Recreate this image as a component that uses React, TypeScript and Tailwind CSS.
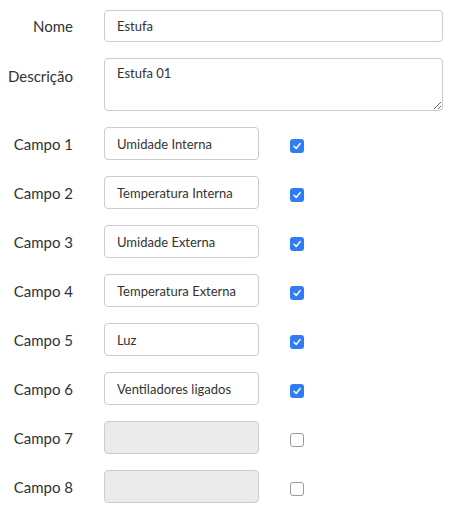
const campos = [
    { label: 'Campo 1', value: 'Umidade Interna', checked: true },
    { label: 'Campo 2', value: 'Temperatura Interna', checked: true },
    { label: 'Campo 3', value: 'Umidade Externa', checked: true },
    { label: 'Campo 4', value: 'Temperatura Externa', checked: true },
    { label: 'Campo 5', value: 'Luz', checked: true },
    { label: 'Campo 6', value: 'Ventiladores ligados', checked: true },
    { label: 'Campo 7', value: '', checked: false },
    { label: 'Campo 8', value: '', checked: false },
]

function Check({ checked }: { checked: boolean }) {
    if (checked) {
        return (
            <span className="mt-[5px] flex h-[14px] w-[14px] items-center justify-center rounded-[3px] bg-[#2f7cf6]">
                <svg width="10" height="10" viewBox="0 0 10 10" fill="none">
                    <path d="M2 5.2 L4.2 7.4 L8.2 2.6" stroke="white" strokeWidth="1.5" strokeLinecap="round" strokeLinejoin="round" />
                </svg>
            </span>
        )
    }
    return <span className="mt-[5px] h-[14px] w-[14px] rounded-[3px] border border-[#9a9a9a] bg-white" />
}

export default function App() {
    return (
        <div className="min-h-[509px] w-[465px] bg-white pt-[10px] pr-[22px] text-[#333] font-['Source_Sans_Pro','Lato',sans-serif]">
            <div className="flex flex-col gap-4">
                <div className="flex h-[32px] items-center">
                    <label className="w-[73px] shrink-0 text-right text-[15px]">Nome</label>
                    <input
                        readOnly
                        value="Estufa"
                        className="ml-[31px] h-[32px] flex-1 rounded-[4px] border border-[#cccccc] bg-white px-3 text-[13px] outline-none"
                    />
                </div>
                <div className="flex h-[53px] items-start">
                    <label className="w-[73px] shrink-0 pt-[7px] text-right text-[15px]">Descrição</label>
                    <textarea
                        readOnly
                        defaultValue="Estufa 01"
                        className="ml-[31px] block h-[53px] flex-1 resize-y rounded-[4px] border border-[#cccccc] bg-white px-3 pt-[5px] text-[13px] leading-[18px] outline-none"
                    />
                </div>
                {campos.map((c) => (
                    <div key={c.label} className="flex h-[33px] items-center">
                        <label className="w-[73px] shrink-0 pt-[2px] text-right text-[15px]">{c.label}</label>
                        <input
                            readOnly
                            disabled={!c.value}
                            value={c.value}
                            className={
                                c.value
                                    ? 'ml-[31px] h-[33px] w-[155px] rounded-[4px] border border-[#cccccc] bg-white px-3 text-[13px] text-[#333] outline-none'
                                    : 'ml-[31px] h-[33px] w-[155px] rounded-[4px] border border-[#cccccc] bg-[#ebebeb] px-3 text-[13px] outline-none'
                            }
                        />
                        <div className="ml-[31px] flex">
                            <Check checked={c.checked} />
                        </div>
                    </div>
                ))}
            </div>
        </div>
    )
}
